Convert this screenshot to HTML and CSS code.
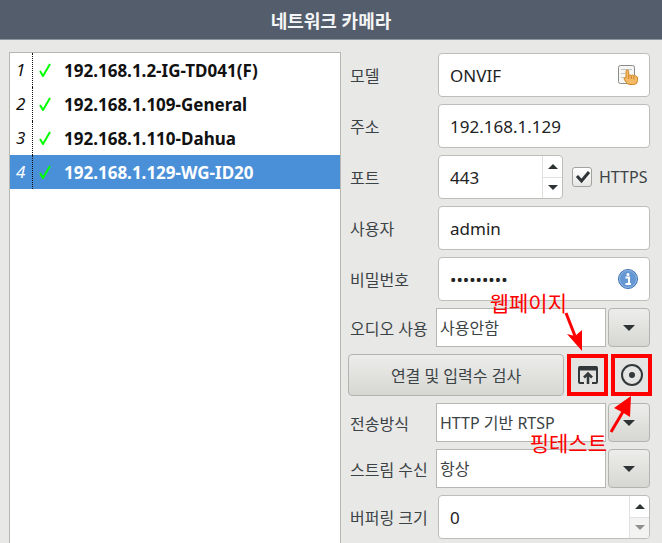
FILE: index.html
```html
<!DOCTYPE html>
<html lang="ko">

<head>
    <title>네트워크 카메라</title>
    <meta charset="utf-8">
    <meta name="viewport" content="width=device-width, initial-scale=1.0">

    <link rel="stylesheet" href="styles.css">
</head>

<body>

    <header>
        <h1>네트워크 카메라</h1>
    </header>

    <main>
        <ol class="cameras">
            <li><span class="number">1</span><svg class="tick" viewBox="0 0 12 14"><path d="M1 8l3 5L11 1" /></svg>192.168.1.2-IG-TD041(F)</li>
            <li><span class="number">2</span><svg class="tick" viewBox="0 0 12 14"><path d="M1 8l3 5L11 1" /></svg>192.168.1.109-General</li>
            <li><span class="number">3</span><svg class="tick" viewBox="0 0 12 14"><path d="M1 8l3 5L11 1" /></svg>192.168.1.110-Dahua</li>
            <li class="selected"><span class="number">4</span><svg class="tick" viewBox="0 0 12 14"><path d="M1 8l3 5L11 1" /></svg>192.168.1.129-WG-ID20</li>
        </ol>

        <form>
            <div class="row">
                <label for="model">모델</label>
                <div class="field">
                    <input type="text" id="model" value="ONVIF">
                    <button type="button" class="inside" aria-label="모델 선택">
                        <svg width="22" height="22" viewBox="0 0 22 22">
                            <rect x="1.5" y="1.5" width="16" height="18" rx="2" fill="#f6f6f4" stroke="#8b8b88" />
                            <path d="M4 5.500h11M4 9.500h4M4 13.500h3" stroke="#c4c4c0" />
                            <path d="M9 7.500q0-1.500 1.300-1.500t1.400 1.500v4q1.300-1.200 2.600 0 1.300-1 2.500.300 1.400-.8 2.400.600 1.300 0 1.300 1.600v2.500q0 4-4 4h-3.500q-2.500 0-4-2.300l-1.800-3q-.5-1.500.9-1.700l.9.700z" fill="#f3bb68" stroke="#cf8420" />
                            <path d="M11.700 11.500v3.500M14.300 12v3M16.800 12.500v3" stroke="#cf8420" />
                        </svg>
                    </button>
                </div>
            </div>

            <div class="row">
                <label for="address">주소</label>
                <div class="field"><input type="text" id="address" value="192.168.1.129"></div>
            </div>

            <div class="row">
                <label for="port">포트</label>
                <div class="field port">
                    <input type="number" id="port" value="443">
                    <div class="spin">
                        <button type="button" aria-label="포트 증가"><svg width="10" height="5"><path d="M0 5l5-5 5 5z" /></svg></button>
                        <button type="button" aria-label="포트 감소"><svg width="10" height="5"><path d="M0 0l5 5 5-5z" /></svg></button>
                    </div>
                </div>
                <label class="https">
                    <input type="checkbox" checked>
                    <svg class="mark" viewBox="0 0 16 14"><path d="M2 6l4.500 5L14 2" /></svg>
                    HTTPS
                </label>
            </div>

            <div class="row">
                <label for="user">사용자</label>
                <div class="field"><input type="text" id="user" value="admin"></div>
            </div>

            <div class="row">
                <label for="password">비밀번호</label>
                <div class="field">
                    <input type="password" id="password" value="123456789">
                    <button type="button" class="inside" aria-label="비밀번호 정보">
                        <svg width="22" height="22" viewBox="0 0 22 22">
                            <circle cx="11" cy="11" r="9.500" fill="#6497d3" stroke="#3d70b0" />
                            <circle cx="11" cy="11" r="8.500" fill="none" stroke="#8fb6e2" />
                            <circle cx="11" cy="6.500" r="1.500" fill="#fff" />
                            <path d="M8.500 9.500h3.500v6M8.500 16h5.500" fill="none" stroke="#fff" stroke-width="2" />
                        </svg>
                    </button>
                </div>
            </div>

            <div class="row">
                <label for="audio">오디오 사용</label>
                <div class="combo">
                    <select id="audio"><option>사용안함</option></select>
                    <button type="button" aria-label="오디오 목록 열기"><svg width="12" height="6"><path d="M0 0l6 6 6-6z" /></svg></button>
                </div>
            </div>

            <div class="actions">
                <button type="button" class="check">연결 및 입력수 검사</button>
                <button type="button" class="marked" aria-label="웹페이지">
                    <svg width="24" height="24" viewBox="0 0 24 24" fill="none" stroke="#33393b" stroke-width="2">
                        <path d="M8 20H4q-1 0-1-1V5q0-1 1-1h16q1 0 1 1v14q0 1-1 1h-4" />
                        <path d="M3 5.500h18" stroke-width="4" />
                        <path d="M12 21V11M8 14.500l4-4 4 4" stroke-width="2.500" />
                    </svg>
                </button>
                <button type="button" class="marked" aria-label="핑테스트">
                    <svg width="24" height="24" viewBox="0 0 24 24">
                        <circle cx="12" cy="12" r="10" fill="none" stroke="#33393b" stroke-width="2" />
                        <circle cx="12" cy="12" r="3" fill="#33393b" />
                    </svg>
                </button>

                <!-- help notes over the two tool buttons -->
                <svg class="arrows" width="302" height="176" viewBox="0 0 302 176">
                    <path d="M218 29l9 23" />
                    <path d="M263 148l13-22" />
                    <path class="head" d="M234 67l-15-17 8 2 7-6z" />
                    <path class="head" d="M283 112l-17 12 8 4 8 5z" />
                </svg>
                <span class="note web">웹페이지</span>
                <span class="note ping">핑테스트</span>
            </div>

            <div class="row">
                <label for="transport">전송방식</label>
                <div class="combo">
                    <select id="transport"><option>HTTP 기반 RTSP</option></select>
                    <button type="button" aria-label="전송방식 목록 열기"><svg width="12" height="6"><path d="M0 0l6 6 6-6z" /></svg></button>
                </div>
            </div>

            <div class="row">
                <label for="stream">스트림 수신</label>
                <div class="combo">
                    <select id="stream"><option>항상</option></select>
                    <button type="button" aria-label="스트림 목록 열기"><svg width="12" height="6"><path d="M0 0l6 6 6-6z" /></svg></button>
                </div>
            </div>

            <div class="row">
                <label for="buffer">버퍼링 크기</label>
                <div class="field">
                    <input type="number" id="buffer" value="0" min="0">
                    <div class="spin">
                        <button type="button" aria-label="버퍼링 증가"><svg width="10" height="5"><path d="M0 5l5-5 5 5z" /></svg></button>
                        <button type="button" aria-label="버퍼링 감소" disabled><svg width="10" height="5"><path d="M0 0l5 5 5-5z" /></svg></button>
                    </div>
                </div>
            </div>
        </form>
    </main>

</body>

</html>
```
FILE: styles.css
```css
* {
    box-sizing: border-box;
}

body {
    margin: 0;
    min-height: 100vh;
    display: flex;
    flex-direction: column;
    background-color: #e8e8e6;
    color: #3c4346;
    font-family: "Noto Sans", "Noto Sans CJK KR", sans-serif;
    font-size: 16px;
}

header {
    height: 40px;
    padding-top: 2px;
    background-color: #535d6c;
    border-bottom: 1px solid #8d939c;
    text-align: center;
}

h1 {
    margin: 0;
    color: #f4f5f6;
    font-size: 18px;
    line-height: 38px;
}

main {
    flex: 1;
    display: grid;
    grid-template-columns: 1fr 302px;
    gap: 7px;
    padding: 12px 12px 0 9px;
}

.cameras {
    margin: 0;
    padding: 0;
    list-style: none;
    background-color: #fff;
    border: 1px solid #b6b6b3;
    border-bottom: none;
    color: #111;
    font-size: 17px;
    font-weight: bold;
}

.cameras li {
    height: 34px;
    display: flex;
    align-items: center;
}

.cameras .selected {
    background-color: #4a90d9;
    color: #fff;
}

.number {
    width: 23px;
    height: 34px;
    line-height: 34px;
    padding-left: 6px;
    border-right: 1px dotted #111;
    font-style: italic;
    font-weight: normal;
}

.tick {
    width: 12px;
    height: 14px;
    margin: 0 13px 0 6px;
    fill: none;
    stroke: #0f0;
    stroke-width: 2;
}

form {
    display: flex;
    flex-direction: column;
    gap: 7px;
    padding-top: 1px;
}

.row {
    display: flex;
    align-items: center;
}

.row > label:first-child {
    width: 88px;
    padding-left: 2px;
    white-space: nowrap;
}

button,
input,
select {
    margin: 0;
    color: inherit;
    font: inherit;
}

button {
    padding: 0;
    display: flex;
    align-items: center;
    justify-content: center;
    border: none;
    background: none;
    fill: #2e3436;
}

.field {
    flex: 1;
    height: 44px;
    margin-left: 2px;
    display: flex;
    background-color: #fff;
    border: 1px solid #bdbdba;
    border-radius: 4px;
    overflow: hidden;
}

.field input {
    flex: 1;
    min-width: 0;
    padding: 0 0 0 11px;
    border: none;
    outline: none;
    background: none;
    color: #222;
    font-size: 17px;
    appearance: textfield;
}

.field input::-webkit-inner-spin-button {
    display: none;
}

.inside {
    width: 42px;
}

.port {
    flex: none;
    width: 125px;
}

.spin {
    width: 20px;
    display: flex;
    flex-direction: column;
    border-left: 1px solid #e0e0de;
}

.spin button {
    flex: 1;
}

.spin button + button {
    border-top: 1px solid #e0e0de;
}

.spin button:disabled {
    background-color: #f3f3f2;
    fill: #8e9192;
}

.https {
    position: relative;
    margin-left: 9px;
    display: flex;
    align-items: center;
    gap: 7px;
}

.https input {
    appearance: none;
    width: 20px;
    height: 20px;
    border: 1px solid #a3a39f;
    border-radius: 3px;
    background: linear-gradient(#fff, #e6e6e4);
}

.mark {
    position: absolute;
    left: 3px;
    width: 16px;
    height: 14px;
    fill: none;
    stroke: #2e3436;
    stroke-width: 3;
    pointer-events: none;
}

.https input:not(:checked) + .mark {
    display: none;
}

.combo {
    flex: 1;
    height: 39px;
    display: flex;
    gap: 2px;
}

.combo select {
    flex: 1;
    min-width: 0;
    appearance: none;
    padding: 0 3px;
    border: 1px solid #b6b6b3;
    border-radius: 0;
    background-color: #fff;
}

.combo button,
.check,
.marked {
    border: 1px solid #b3b3af;
    border-radius: 4px;
    background: linear-gradient(#ededeb, #d6d6d3);
}

.combo button {
    width: 42px;
}

.actions {
    position: relative;
    height: 42px;
    margin-right: -2px;
    display: flex;
    gap: 3px;
}

.check {
    flex: 1;
}

.marked {
    width: 41px;
    border: 4px solid #f00;
    border-radius: 0;
    background: #e4e4e2;
}

.arrows {
    position: absolute;
    left: 0;
    top: -70px;
    stroke: #f00;
    stroke-width: 3;
    pointer-events: none;
}

.arrows .head {
    fill: #f00;
    stroke: none;
}

.note {
    position: absolute;
    color: #f00;
    font-size: 21px;
    line-height: 24px;
    white-space: nowrap;
    pointer-events: none;
}

.web {
    right: 85px;
    top: -63px;
}

.ping {
    right: 45px;
    top: 77px;
}
```
